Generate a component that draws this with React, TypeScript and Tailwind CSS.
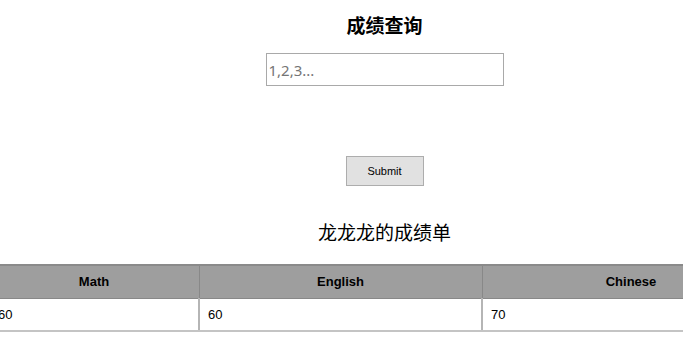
const scores = [
	{ subject: "Math", score: 60, w: "w-[210px]" },
	{ subject: "English", score: 60, w: "w-[283px]" },
	{ subject: "Chinese", score: 70, w: "w-[298px]" },
];

export default function App() {
	return (
		<div className="w-[683px] h-[340px] overflow-hidden bg-white">
			<div className="w-[791px] -ml-[11px] flex flex-col items-center font-['Noto_Sans_CJK_SC',sans-serif]">
				<h1 className="mt-[11px] h-[28px] text-[19px] leading-[28px] font-bold text-black">成绩查询</h1>
				<input
					type="text"
					placeholder="1,2,3..."
					className="mt-[14px] w-[238px] h-[33px] border border-[#a9a9a9] px-[2px] text-[15px] font-['Noto_Sans',sans-serif] placeholder:text-[#757575] outline-none"
				/>
				<button className="mt-[70px] w-[78px] h-[30px] bg-[#e1e1e1] border border-[#adadad] text-[11px] text-black font-['Liberation_Sans',sans-serif]">
					Submit
				</button>
				<h2 className="mt-[31px] h-[30px] text-[19px] leading-[30px] font-normal text-black">龙龙龙的成绩单</h2>
				<table className="mt-[17px] w-[791px] table-fixed border-collapse font-['Liberation_Sans',sans-serif] text-[13px]">
					<thead>
						<tr className="bg-[#9e9e9e]">
							{scores.map((s) => (
								<th
									key={s.subject}
									className={`${s.w} h-[33px] border border-[#888888] border-t-[2px] border-t-[#8a8a8a] font-bold text-black text-center`}
								>
									{s.subject}
								</th>
							))}
						</tr>
					</thead>
					<tbody>
						<tr>
							{scores.map((s) => (
								<td
									key={s.subject}
									className="h-[33px] px-[8px] border-l-[2px] border-r-[2px] border-l-[#b5b5b5] border-r-[#b5b5b5] border-b-[2px] border-b-[#c4c4c4] text-black"
								>
									{s.score}
								</td>
							))}
						</tr>
					</tbody>
				</table>
			</div>
		</div>
	);
}
